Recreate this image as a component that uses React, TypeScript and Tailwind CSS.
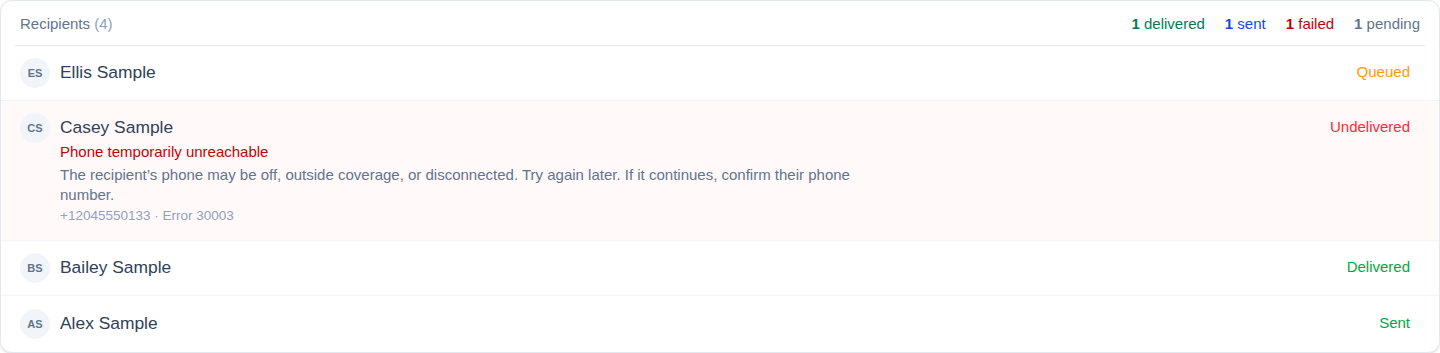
import React from 'react';

type Status = 'queued' | 'undelivered' | 'delivered' | 'sent';

type Recipient = {
  initials: string;
  name: string;
  status: Status;
  error?: {
    title: string;
    detail: string;
    phone: string;
    code: string;
  };
};

const recipients: Recipient[] = [
  { initials: 'ES', name: 'Ellis Sample', status: 'queued' },
  {
    initials: 'CS',
    name: 'Casey Sample',
    status: 'undelivered',
    error: {
      title: 'Phone temporarily unreachable',
      detail:
        "The recipient’s phone may be off, outside coverage, or disconnected. Try again later. If it continues, confirm their phone number.",
      phone: '+12045550133',
      code: 'Error 30003',
    },
  },
  { initials: 'BS', name: 'Bailey Sample', status: 'delivered' },
  { initials: 'AS', name: 'Alex Sample', status: 'sent' },
];

const statusStyles: Record<Status, { label: string; className: string }> = {
  queued: { label: 'Queued', className: 'text-amber-500' },
  undelivered: { label: 'Undelivered', className: 'text-red-500' },
  delivered: { label: 'Delivered', className: 'text-green-600' },
  sent: { label: 'Sent', className: 'text-green-600' },
};

function RecipientRow({ recipient }: { recipient: Recipient }) {
  const status = statusStyles[recipient.status];
  const failed = !!recipient.error;

  return (
    <div
      className={`flex items-start gap-2.5 border-b border-slate-100 px-[19px] pt-3 last:border-b-0 last:pt-[13px] ${
        failed ? 'bg-[#fff9f9] pb-[14px]' : 'bg-white pb-3'
      }`}
    >
      <div className="flex h-[30px] w-[30px] shrink-0 items-center justify-center rounded-full bg-slate-100 text-[11px] font-bold text-slate-500">
        {recipient.initials}
      </div>
      <div className="min-w-0 flex-1">
        <div className="flex h-[30px] items-center pb-0.5 text-[17.4px] text-slate-700">{recipient.name}</div>
        {recipient.error && (
          <div>
            <div className="-mt-px text-[15px] leading-5 text-red-700">{recipient.error.title}</div>
            <p className="mt-[3px] max-w-[800px] text-[15px] leading-5 text-slate-500">
              {recipient.error.detail}
            </p>
            <div className="mt-px text-[13.5px] leading-5 text-slate-400">
              {recipient.error.phone} · {recipient.error.code}
            </div>
          </div>
        )}
      </div>
      <div className={`flex h-[30px] items-center pr-2.5 pb-0.5 text-[15px] ${status.className}`}>
        {status.label}
      </div>
    </div>
  );
}

export default function App() {
  return (
    <div className="h-[353px] w-full bg-white font-['Liberation_Sans',Arial,sans-serif]">
      <div className="h-[353px] overflow-hidden rounded-xl border border-slate-200 bg-white shadow-sm">
        {/* Header */}
        <div className="mx-[14px] flex items-center justify-between border-b border-slate-200 px-[5px] pt-[13px] pb-[11px] text-[15px] leading-5">
          <div className="text-slate-500">
            Recipients <span className="text-slate-400">(4)</span>
          </div>
          <div className="flex items-center gap-5">
            <span className="text-emerald-700">
              <span className="font-bold">1</span> delivered
            </span>
            <span className="text-blue-700">
              <span className="font-bold">1</span> sent
            </span>
            <span className="text-red-700">
              <span className="font-bold">1</span> failed
            </span>
            <span className="text-slate-500">
              <span className="font-bold">1</span> pending
            </span>
          </div>
        </div>

        {/* Rows */}
        {recipients.map(r => (
          <RecipientRow key={r.initials} recipient={r} />
        ))}
      </div>
    </div>
  );
}
